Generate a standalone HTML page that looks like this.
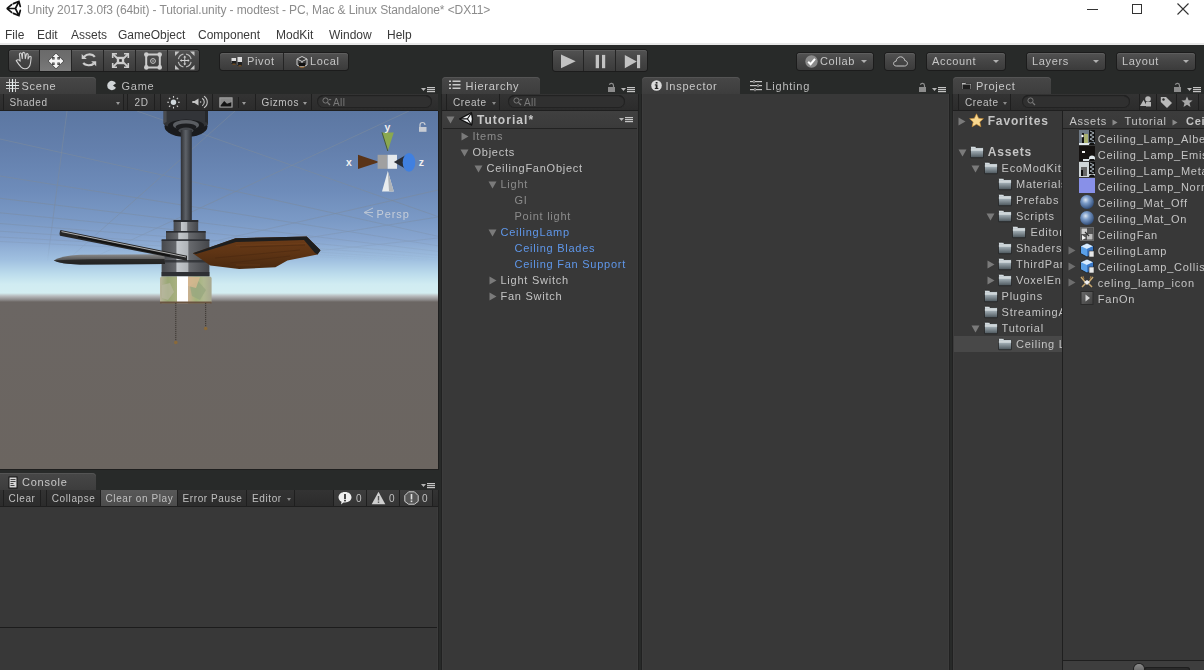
<!DOCTYPE html>
<html><head><meta charset="utf-8">
<style>
*{box-sizing:border-box;margin:0;padding:0}
html,body{width:1204px;height:670px;overflow:hidden;background:#282a29;font-family:"Liberation Sans",sans-serif}
.t{-webkit-font-smoothing:antialiased;transform:translateZ(0)}
.a{position:absolute}
svg{position:absolute;overflow:visible}
.t{position:absolute;white-space:pre;line-height:1}
.menu{font-size:12px;color:#3a3a3a;top:29px}
.tb{position:absolute;top:50px;height:21px;border-radius:3px;background:linear-gradient(#525252,#474747 40%,#3b3b3b);box-shadow:0 0 0 1px #1c1c1c, inset 0 1px 0 #5e5e5e}
.tb2{top:53px;height:17px}
.sep{position:absolute;top:0;width:1px;height:100%;background:#242424}
.tbt{font-size:11px;color:#c6c6c6;letter-spacing:.65px}
.arr{position:absolute;width:0;height:0;border-left:3px solid transparent;border-right:3px solid transparent;border-top:3px solid #b0b0b0}
.panel{position:absolute;background:#383838}
.tab{position:absolute;height:17px;background:linear-gradient(#484848,#3e3e3e);border-radius:0 4px 0 0;box-shadow:inset 0 1px 0 #535353,inset -1px 0 0 #303030}
.tabt{font-size:11px;color:#c8c8c8;letter-spacing:.75px}
.tabi{font-size:11px;color:#bdbdbd;letter-spacing:.75px}
.ptb{position:absolute;height:17px;background:linear-gradient(#313131,#2a2a2a);box-shadow:inset 0 -1px 0 #1e1e1e}
.ui{font-size:10px;color:#c0c0c0;letter-spacing:.6px}
.h{font-size:11px;letter-spacing:.75px;color:#c4c4c4}
.g{color:#8c8c8c}
.b{color:#5f97ea}
.tri{position:absolute;width:0;height:0}
.tr{border-top:4px solid transparent;border-bottom:4px solid transparent;border-left:7px solid #7a7a7a}
.td{border-left:4px solid transparent;border-right:4px solid transparent;border-top:7px solid #7a7a7a}
</style></head><body>

<!-- title & menu -->
<div class="a" style="left:0;top:0;width:1204px;height:44px;background:#fff"></div>
<div class="a" style="left:0;top:43px;width:1204px;height:2px;background:#e8e8e8"></div>
<svg width="30" height="20" style="left:0;top:0" viewBox="0 0 30 20"><g fill="none" stroke="#111" stroke-width="1.7" stroke-linecap="round"><path d="M7.2,8.5 L15.4,8.5 M15.4,8.5 L18.6,2.2 M15.4,8.5 L18.6,14.8 M7.4,8.2 L11.6,4.6 M13.4,3.6 L18.9,1.4 L20.3,6.5 M20.3,10.4 L18.9,15.5 L13.4,13.4 M11.6,12.4 L7.4,8.8"/></g></svg>
<div class="t" style="left:27px;top:4px;font-size:12px;color:#8c8c8c;letter-spacing:-.1px">Unity 2017.3.0f3 (64bit) - Tutorial.unity - modtest - PC, Mac &amp; Linux Standalone* &lt;DX11&gt;</div>
<div class="t menu" style="left:5px">File</div>
<div class="t menu" style="left:37px">Edit</div>
<div class="t menu" style="left:71px">Assets</div>
<div class="t menu" style="left:118px">GameObject</div>
<div class="t menu" style="left:198px">Component</div>
<div class="t menu" style="left:276px">ModKit</div>
<div class="t menu" style="left:329px">Window</div>
<div class="t menu" style="left:387px">Help</div>
<!-- window controls -->
<div class="a" style="left:1087px;top:9px;width:11px;height:1px;background:#333"></div>
<div class="a" style="left:1132px;top:4px;width:10px;height:10px;border:1px solid #333"></div>
<svg width="14" height="14" style="left:1177px;top:3px"><path d="M0.5,0.5 L11.5,11.5 M11.5,0.5 L0.5,11.5" stroke="#333" stroke-width="1.1"/></svg>

<!-- main toolbar -->
<div class="tb" style="left:9px;width:190px">
  <div class="a" style="left:31px;top:0;width:32px;height:21px;background:linear-gradient(#6a6a6a,#707070 50%,#7a7a7a)"></div>
  <div class="sep" style="left:30px"></div><div class="sep" style="left:62px"></div><div class="sep" style="left:94px"></div><div class="sep" style="left:126px"></div><div class="sep" style="left:158px"></div>
</div>
<!-- hand -->
<svg width="20" height="20" style="left:14px;top:51px" viewBox="0 0 20 20"><path d="M2.2,9.6 Q3.4,8.4 4.8,8.9 L6.2,10.2 L5.4,3.2 Q5.6,2 6.6,2.1 Q7.4,2.2 7.6,3.2 L8.3,7.6 L8.6,2.2 Q9,1.3 9.9,1.4 Q10.8,1.6 10.9,2.5 L11.3,7.6 L12.3,3.3 Q12.8,2.4 13.6,2.7 Q14.3,3 14.2,4 L14,8 L15.3,5.8 Q15.9,5 16.7,5.5 Q17.3,6 17.1,7 L16.6,11.5 Q16.2,14.8 14.6,16.4 Q13,18 10.6,17.8 Q8.6,17.6 7.2,16.2 Q5,13.8 2.2,9.6Z" fill="none" stroke="#d4d4d4" stroke-width="1.05" stroke-linejoin="round"/></svg>
<!-- move -->
<svg width="16" height="16" style="left:48px;top:53px" viewBox="0 0 16 16"><path d="M8,0.5 L11.4,4.1 L9.4,4.1 L9.4,6.6 L11.9,6.6 L11.9,4.6 L15.5,8 L11.9,11.4 L11.9,9.4 L9.4,9.4 L9.4,11.9 L11.4,11.9 L8,15.5 L4.6,11.9 L6.6,11.9 L6.6,9.4 L4.1,9.4 L4.1,11.4 L0.5,8 L4.1,4.6 L4.1,6.6 L6.6,6.6 L6.6,4.1 L4.6,4.1 Z" fill="#f6f6f6" stroke="#3a3a3a" stroke-width="1.1" stroke-linejoin="round" style="paint-order:stroke"/></svg>
<!-- rotate -->
<svg width="24" height="20" style="left:76px;top:50px" viewBox="0 0 24 20"><g fill="none" stroke="#cdcdcd" stroke-width="2.1"><path d="M7.6,8.2 A6.1,4.9 0 0 1 18.8,6.8"/><path d="M7.2,13 A6.2,3.9 0 0 0 17.8,13.6"/></g><path d="M5.7,3.9 L5.7,8.9 L10.8,8.9 Z M20.2,11.2 L15.2,11.2 L20.2,16.2 Z" fill="#cdcdcd"/></svg>
<!-- scale -->
<svg width="19" height="17" style="left:111px;top:52px" viewBox="0 0 19 17"><g fill="#cdcdcd"><path d="M0.9,1 H6 V2.6 H2.5 V6 H0.9 Z M18.1,1 H13 V2.6 H16.5 V6 H18.1 Z M0.9,16 H6 V14.4 H2.5 V10.9 H0.9 Z M18.1,16 H13 V14.4 H16.5 V10.9 H18.1 Z"/><rect x="5.9" y="4.9" width="7.2" height="7.2"/></g><g stroke="#cdcdcd" stroke-width="1.8"><path d="M2,2 L6.3,6.3 M17,2 L12.7,6.3 M2,15 L6.3,10.7 M17,15 L12.7,10.7"/></g><rect x="5.9" y="4.9" width="7.2" height="7.2" fill="none" stroke="#cdcdcd" stroke-width=".1"/><rect x="8.2" y="7.2" width="2.6" height="2.6" fill="#2e2e2e"/></svg>
<!-- rect -->
<svg width="18" height="18" style="left:144px;top:52px" viewBox="0 0 18 18"><g fill="#cccccc"><rect x="2" y="1.5" width="14" height="2"/><rect x="2" y="14.5" width="14" height="2"/><rect x="1.2" y="2" width="2" height="14"/><rect x="14.8" y="2" width="2" height="14"/><circle cx="2.3" cy="2.6" r="2.3"/><circle cx="15.7" cy="2.6" r="2.3"/><circle cx="2.3" cy="15.4" r="2.3"/><circle cx="15.7" cy="15.4" r="2.3"/></g><circle cx="9" cy="9" r="2.4" fill="none" stroke="#c8c8c8" stroke-width="1"/><circle cx="9" cy="9" r=".8" fill="#c8c8c8"/></svg>
<!-- transform -->
<svg width="20" height="19" style="left:175px;top:51px" viewBox="0 0 20 19"><g fill="#c4c4c4"><path d="M0,0.5 L4.5,0.5 L0,5Z M19.5,0.5 L15,0.5 L19.5,5Z M0,18.5 L4.5,18.5 L0,14Z M19.5,18.5 L15,18.5 L19.5,14Z"/></g><g fill="none" stroke="#b8b8b8" stroke-width="1.2"><path d="M3.4,8.2 A6.4,6.4 0 0 1 8.4,3.2 M11.1,3.2 A6.4,6.4 0 0 1 16.1,8.2 M16.1,10.8 A6.4,6.4 0 0 1 11.1,15.8 M8.4,15.8 A6.4,6.4 0 0 1 3.4,10.8"/></g><g stroke="#cfcfcf" stroke-width="1"><path d="M9.75,5.5 V13.5 M5.75,9.5 H13.75"/></g><path d="M9.75,4.6 L8.3,6.4 L11.2,6.4Z M9.75,14.4 L8.3,12.6 L11.2,12.6Z M4.9,9.5 L6.7,8.05 L6.7,10.95Z M14.6,9.5 L12.8,8.05 L12.8,10.95Z" fill="#cfcfcf"/></svg>
<!-- pivot/local -->
<div class="tb tb2" style="left:220px;width:128px"><div class="sep" style="left:63px"></div></div>
<svg width="12" height="10" style="left:231px;top:57px" viewBox="0 0 12 10"><rect x="0.5" y="1" width="4.5" height="5" fill="#dcdcdc"/><rect x="0.5" y="4" width="4.5" height="3" fill="#202020"/><rect x="6.5" y="0" width="4.5" height="8" fill="#dcdcdc"/><rect x="6.5" y="5" width="4.5" height="4" fill="#202020"/><rect x="1.5" y="6.5" width="3" height="1.5" fill="#6b4a22"/><rect x="7.5" y="8" width="3" height="1.5" fill="#6b4a22"/></svg>
<div class="t tbt" style="left:247px;top:56px">Pivot</div>
<svg width="12" height="12" style="left:296px;top:56px" viewBox="0 0 12 12"><path d="M6,0.5 L11,3 L11,9 L6,11.5 L1,9 L1,3 Z" fill="#3a3a3a" stroke="#cfcfcf" stroke-width="1"/><path d="M1,3 L6,5.5 L11,3 M6,5.5 L6,11.5" fill="none" stroke="#cfcfcf" stroke-width="1"/><rect x="3" y="7" width="6" height="3" fill="#111"/><path d="M3,10.5 L6,11.8 L9,10.5" stroke="#8a5a22" stroke-width="1" fill="none"/></svg>
<div class="t tbt" style="left:310px;top:56px">Local</div>

<!-- play -->
<div class="tb" style="left:553px;width:94px"><div class="sep" style="left:30px"></div><div class="sep" style="left:62px"></div></div>
<svg width="94" height="21" style="left:553px;top:50px"><g fill="#c2c2c2"><path d="M8,4.5 L22.7,11.3 L8,18.2Z"/><rect x="42.7" y="4.9" width="3.3" height="13.3"/><rect x="49" y="4.9" width="3.2" height="13.3"/><path d="M71.8,4.9 L83.8,11.5 L71.8,18.2Z"/><rect x="84" y="4.9" width="3.1" height="13.3"/></g></svg>

<!-- right buttons -->
<div class="tb tb2" style="left:797px;width:76px"></div>
<svg width="13" height="13" style="left:804.5px;top:55px" viewBox="0 0 13 13"><circle cx="6.5" cy="6.5" r="6.2" fill="#8a8a8a"/><path d="M3.2,6.8 L5.6,9.2 L10,3.8" fill="none" stroke="#fff" stroke-width="2"/></svg>
<div class="t tbt" style="left:820px;top:56px">Collab</div>
<div class="arr" style="left:860.5px;top:60px"></div>
<div class="tb tb2" style="left:885px;width:30px"></div>
<svg width="15" height="11" style="left:893px;top:56px" viewBox="0 0 15 11"><path d="M3.5,10 C1.5,10 0.6,8.8 0.6,7.6 C0.6,6.2 1.7,5.2 3.1,5.3 C3.3,2.8 5.2,0.8 7.6,0.8 C9.8,0.8 11.5,2.5 11.8,4.6 C13.3,4.7 14.4,5.9 14.4,7.3 C14.4,8.8 13.3,10 11.6,10 Z" fill="none" stroke="#c8c8c8" stroke-width="1"/></svg>
<div class="tb tb2" style="left:927px;width:78px"></div>
<div class="t tbt" style="left:932px;top:56px">Account</div>
<div class="arr" style="left:992.5px;top:60px"></div>
<div class="tb tb2" style="left:1027px;width:78px"></div>
<div class="t tbt" style="left:1032px;top:56px">Layers</div>
<div class="arr" style="left:1092.5px;top:60px"></div>
<div class="tb tb2" style="left:1117px;width:78px"></div>
<div class="t tbt" style="left:1122px;top:56px">Layout</div>
<div class="arr" style="left:1182.5px;top:60px"></div>

<div class="a" style="left:0px;top:77px;width:96px;height:17px;background:linear-gradient(#474747,#3d3d3d);border-radius:0 4px 0 0;box-shadow:inset 0 1px 0 #545454"></div>
<svg width="13" height="13" style="left:6px;top:79px" viewBox="0 0 13 13"><g stroke="#c8c8c8" stroke-width="1"><path d="M3.5,0 V13 M9.5,0 V13 M0,3.5 H13 M0,9.5 H13"/></g><path d="M6.5,0 V13 M0,6.5 H13" stroke="#e8f0f0" stroke-width="1.2"/></svg>
<div class="t tabt" style="left:21.5px;top:81px;font-size:11px;">Scene</div>
<svg width="10" height="11" style="left:107px;top:80px" viewBox="0 0 10 11"><path d="M9,3.2 A4.7,4.7 0 1 0 9,7.8 L6,5.5 Z" fill="#d0d4d6"/></svg>
<div class="t tabi" style="left:121.5px;top:81px;font-size:11px;">Game</div>
<svg width="15" height="6" style="left:421px;top:87px" viewBox="0 0 15 6"><path d="M0,1 L5,1 L2.5,4Z" fill="#b4b4b4"/><rect x="6" y="0" width="8" height="1.2" fill="#c4c4c4"/><rect x="6" y="2" width="8" height="1.2" fill="#c4c4c4"/><rect x="6" y="4" width="8" height="1.2" fill="#c4c4c4"/></svg>
<div class="a" style="left:0px;top:94px;width:438px;height:17px;background:linear-gradient(#333333,#2b2b2b);box-shadow:inset 0 -1px 0 #1f1f1f"></div>
<div class="a" style="left:3px;top:94px;width:1px;height:16px;background:#1f1f1f"></div>
<div class="a" style="left:123px;top:94px;width:1px;height:16px;background:#1f1f1f"></div>
<div class="a" style="left:127px;top:94px;width:1px;height:16px;background:#1f1f1f"></div>
<div class="a" style="left:154px;top:94px;width:1px;height:16px;background:#1f1f1f"></div>
<div class="a" style="left:160px;top:94px;width:1px;height:16px;background:#1f1f1f"></div>
<div class="a" style="left:186px;top:94px;width:1px;height:16px;background:#1f1f1f"></div>
<div class="a" style="left:212px;top:94px;width:1px;height:16px;background:#1f1f1f"></div>
<div class="a" style="left:255px;top:94px;width:1px;height:16px;background:#1f1f1f"></div>
<div class="a" style="left:311px;top:94px;width:1px;height:16px;background:#1f1f1f"></div>
<div class="a" style="left:4px;top:94px;width:119px;height:16px;background:linear-gradient(#353535,#2d2d2d)"></div>
<div class="t ui" style="left:9.5px;top:98px;font-size:10px;">Shaded</div>
<div class="arr" style="left:115.5px;top:101.5px;border-top-color:#9a9a9a;border-width:3px 2.5px 0"></div>
<div class="t ui" style="left:134.5px;top:98px;font-size:10px;">2D</div>
<svg width="13" height="14" style="left:167px;top:95px" viewBox="0 0 13 14"><circle cx="6.5" cy="7.3" r="2.7" fill="#d0d8dc"/><g stroke="#cfcfcf" stroke-width="1.1"><path d="M6.5,1 V2.8 M6.5,11.8 V13.6 M0.2,7.3 H2 M11,7.3 H12.8 M2,2.8 L3.2,4 M9.8,10.6 L11,11.8 M2,11.8 L3.2,10.6 M9.8,4 L11,2.8"/></g></svg>
<svg width="15" height="14" style="left:192px;top:95px" viewBox="0 0 15 14"><path d="M1,7 L6.5,3.5 L6.5,10.5 Z" fill="#c4c4c4"/><rect x="0.3" y="6" width="2.5" height="2" fill="#c4c4c4"/><circle cx="8.6" cy="7" r=".8" fill="#c4c4c4"/><g fill="none" stroke="#c4c4c4" stroke-width="1.1"><path d="M10.2,3.2 A4.5,4.5 0 0 1 10.2,10.8"/><path d="M12,1.2 A6.8,6.8 0 0 1 12,12.8"/></g></svg>
<svg width="14" height="11" style="left:219px;top:97px" viewBox="0 0 14 11"><rect x="0.8" y="0.8" width="12.3" height="9.3" fill="#8a8a8a" stroke="#a0a0a0" stroke-width="1"/><path d="M1.6,9.4 L1.6,8.6 L5.2,4 L8,6.8 L12.3,5.2 L12.3,9.4Z" fill="#141414"/></svg>
<div class="a" style="left:238px;top:97px;width:1px;height:11px;background:#1f1f1f"></div>
<div class="arr" style="left:241.5px;top:101.5px;border-top-color:#9a9a9a;border-width:3px 2.5px 0"></div>
<div class="t ui" style="left:261.5px;top:98px;font-size:10px;">Gizmos</div>
<div class="arr" style="left:303px;top:101.5px;border-top-color:#9a9a9a;border-width:3px 2.5px 0"></div>
<div class="a" style="left:317px;top:95px;width:115px;height:13px;border-radius:7px;background:#303030;box-shadow:inset 0 0 0 1px #222, inset 0 1px 1px #1a1a1a"></div>
<svg width="10" height="9" style="left:322px;top:97px" viewBox="0 0 10 9"><circle cx="3.5" cy="3.5" r="2.6" fill="none" stroke="#7a7a7a" stroke-width="1"/><path d="M5.4,5.4 L8,8" stroke="#7a7a7a" stroke-width="1.3"/><path d="M6.5,2 L9.5,2 L8,3.5Z" fill="#7a7a7a"/></svg>
<div class="t " style="left:333px;top:98px;font-size:10px;color:#7a7a7a;letter-spacing:.4px">All</div>
<div class="a" style="left:0;top:111px;width:438px;height:358px;overflow:hidden;background:linear-gradient(#5c77a2 0px,#6480ad 40px,#6e8cba 80px,#7b9ac6 110px,#88a6d0 129px,#a0c0e0 149px,#bcdcec 163px,#d0ecf2 173px,#d4eef2 182px,#b8bcbe 185px,#8a8888 189px,#6b6663 191px,#6b6560 358px)"><svg width="438" height="358" style="left:0;top:0" viewBox="0 111 438 358">
<defs>
<linearGradient id="rod" x1="0" x2="1"><stop offset="0" stop-color="#2e3034"/><stop offset=".45" stop-color="#5e6268"/><stop offset=".6" stop-color="#50545a"/><stop offset="1" stop-color="#2a2c30"/></linearGradient>
<linearGradient id="hous" x1="0" x2="1"><stop offset="0" stop-color="#46484c"/><stop offset=".3" stop-color="#66686c"/><stop offset=".32" stop-color="#c4c8cc"/><stop offset=".55" stop-color="#b0b4b8"/><stop offset=".57" stop-color="#686a6e"/><stop offset="1" stop-color="#44464a"/></linearGradient>
<linearGradient id="glass" x1="0" x2="1"><stop offset="0" stop-color="#b8b49c"/><stop offset=".15" stop-color="#9aa876"/><stop offset=".32" stop-color="#a8b080"/><stop offset=".33" stop-color="#ffffff"/><stop offset=".54" stop-color="#ffffff"/><stop offset=".55" stop-color="#c8b090"/><stop offset=".7" stop-color="#a4b47c"/><stop offset=".85" stop-color="#b0b890"/><stop offset="1" stop-color="#a8a890"/></linearGradient>
<linearGradient id="wood" x1="0" y1="0" x2="0" y2="1"><stop offset="0" stop-color="#6c3c18"/><stop offset=".5" stop-color="#5e3414"/><stop offset="1" stop-color="#4a2a10"/></linearGradient>
<linearGradient id="bl2" x1="0" y1="0" x2="0" y2="1"><stop offset="0" stop-color="#8a8a8a"/><stop offset=".5" stop-color="#5a5a5a"/><stop offset="1" stop-color="#252525"/></linearGradient>
<linearGradient id="fadeg" x1="0" y1="111" x2="0" y2="469" gradientUnits="userSpaceOnUse"><stop offset="0" stop-color="#fff"/><stop offset=".25" stop-color="#fff"/><stop offset=".37" stop-color="#fff" stop-opacity=".35"/><stop offset=".42" stop-color="#fff" stop-opacity="0"/></linearGradient><mask id="fade" maskUnits="userSpaceOnUse" x="0" y="111" width="438" height="358"><rect x="0" y="111" width="438" height="358" fill="url(#fadeg)"/></mask>
</defs>
<path d="M0.0,139.0 L438.0,236.3 M0.0,176.0 L438.0,245.8 M0.0,198.3 L438.0,251.5 M0.0,212.8 L438.0,255.3 M0.0,223.5 L438.0,258.0 M0.0,231.2 L438.0,260.0 M0.0,237.0 L438.0,261.5 M0.0,241.5 L438.0,262.7 M137.0,111.0 L438.0,216.6 M45.0,280.0 L67.0,111.0 M45.0,280.0 L235.0,111.0 M45.0,280.0 L409.0,111.0 M45.0,280.0 L438.0,190.0 M45.0,280.0 L438.0,217.0 M45.0,280.0 L438.0,238.0" stroke="#7c8a9c" stroke-opacity=".6" stroke-width="1" fill="none" mask="url(#fade)"/>
<ellipse cx="186" cy="126.5" rx="21.5" ry="10.5" fill="#1a1b1e"/>
<rect x="163.6" y="111" width="44.4" height="13" fill="#323438"/>
<rect x="163.6" y="111" width="3" height="13" fill="#4a4c50"/><rect x="205" y="111" width="3" height="13" fill="#26282b"/>
<ellipse cx="186" cy="124" rx="22.2" ry="4" fill="#323438"/>
<ellipse cx="186" cy="125.5" rx="18" ry="6" fill="#1a1b1e"/>
<ellipse cx="186" cy="125" rx="13" ry="5" fill="#5a5d62"/>
<ellipse cx="186" cy="127" rx="10.5" ry="3.6" fill="#1c1d20"/>
<ellipse cx="186" cy="130.5" rx="7.5" ry="3" fill="#45484d"/>
<rect x="180.8" y="130" width="11" height="91" fill="url(#rod)"/>
<rect x="173.6" y="220.4" width="24.6" height="11.2" fill="url(#hous)"/>
<rect x="173.6" y="220" width="24.6" height="2" fill="#2a2c30"/>
<rect x="166" y="231.6" width="39.7" height="8.3" fill="url(#hous)"/>
<rect x="166" y="231" width="39.7" height="1.6" fill="#2a2c30"/>
<rect x="161.6" y="239.9" width="47.8" height="36.5" fill="url(#hous)"/>
<rect x="161.6" y="239.3" width="47.8" height="1.6" fill="#2a2c30"/>
<rect x="161.6" y="260" width="47.8" height="2.5" fill="#2c2e32" opacity=".8"/>
<rect x="161.6" y="272" width="47.8" height="4.4" fill="#2e3034"/>
<rect x="160" y="276.4" width="51.6" height="26.9" rx="2" fill="url(#glass)"/>
<path d="M162,285 L170,283 L174,292 L168,300 L162,298Z" fill="#b8b8a0" opacity=".7"/><path d="M190,286 L198,281 L206,290 L200,300 L192,296Z" fill="#98a880" opacity=".8"/><path d="M188,277 L200,277 L196,288 L188,286Z" fill="#d8b890" opacity=".8"/>
<rect x="160" y="301.5" width="51.6" height="2" fill="#6a5440"/>
<path d="M175.8,303 L175.8,341 M205.7,303 L205.7,327" stroke="#3a3630" stroke-width="1" stroke-dasharray="1.2,.8"/>
<circle cx="175.8" cy="342.5" r="1.8" fill="#8a6a3a"/><circle cx="205.7" cy="328.5" r="1.8" fill="#8a6a3a"/>
<path d="M53.7,260.5 Q60,256 80,254.8 L164.5,254.3 L165,264 L80,264.5 Q60,264 53.7,260.5Z" fill="url(#bl2)"/>
<path d="M53.7,260.5 Q70,258.5 164.5,259 L165,264 L80,264.5 Q60,264 53.7,260.5Z" fill="#222" opacity=".85"/>
<path d="M60.5,230 L187,255.8 L187,260.8 L60,235.8 Q59,233 60.5,230Z" fill="#262626"/>
<path d="M61.5,231.6 L186,257" stroke="#b0b0b0" stroke-width="1"/>
<path d="M78,236.8 L170,255.8" stroke="#111" stroke-width="1.6"/>
<path d="M192.8,253.3 L235.6,238.3 L306.7,236.4 L320.5,250.3 L317.5,254.5 L287.4,260.5 L275.4,267.2 L239.2,269 L210.3,265.4 Z" fill="url(#wood)"/>
<path d="M192.8,253.3 L235.6,238.3 L306.7,236.4 L320.5,250.3 L317.5,254.5 L315,253 L304,240 L236,242 L196,254 Z" fill="#1e1e1e"/>
<path d="M215,258 L300,250 M230,263 L290,256 M240,247 L305,245" stroke="#4a2810" stroke-width=".8" opacity=".7"/>
<path d="M236,245.5 L306,243.5 M236,265 L260,265" stroke="#7a4620" stroke-width=".6" opacity=".6"/>
<path d="M382,132.4 L393.8,132.4 L387.8,151Z" fill="#8aa850"/>
<path d="M382,132.4 L387.8,151" stroke="#3a4a24" stroke-width=".8"/>
<path d="M358,154.8 L358,169 L379.4,162Z" fill="#5a3418"/>
<path d="M379,159 L385,156 L385,168 L379,165Z" fill="#d0d0d0"/>
<rect x="377.6" y="154.8" width="10" height="14" fill="#a0a0a0"/>
<rect x="387.6" y="154.8" width="9.4" height="14" fill="#e4e8ec"/>
<path d="M393.8,162 L406,155 L406,169Z" fill="#2a2e36"/>
<ellipse cx="409" cy="162.4" rx="6.3" ry="9.4" fill="#4080e0"/>
<path d="M382,191.5 L393.8,191.5 L387.8,171Z" fill="#e8ecee"/><path d="M387.8,171 L393.8,191.5 L389,191.5Z" fill="#b0b4b8"/>
<text x="346" y="165.5" font-family="Liberation Sans" font-weight="bold" font-size="10.5" fill="#f0f0f0">x</text>
<text x="384.5" y="130.5" font-family="Liberation Sans" font-weight="bold" font-size="10.5" fill="#f0f0f0">y</text>
<text x="418.8" y="166" font-family="Liberation Sans" font-weight="bold" font-size="10.5" fill="#f0f0f0">z</text>
<path d="M420,127 L420,125 A2.5,2.5 0 0 1 425,125" stroke="#c8ccd4" stroke-width="1.2" fill="none"/><rect x="419" y="127" width="7.5" height="4.8" fill="#c8ccd4"/>
<path d="M373,208 L364,212.5 L373,217" stroke="#b8c4d4" stroke-width="1" fill="none"/><path d="M364,212.5 L373,212.5" stroke="#b8c4d4" stroke-width="1"/>
</svg>
<div class="t" style="left:376.5px;top:97.5px;font-size:11px;color:#c4ccd8;letter-spacing:.9px">Persp</div></div>
<div class="a" style="left:438px;top:111px;width:1px;height:358px;background:#1e1e1e"></div>
<div class="a" style="left:0px;top:469px;width:439px;height:1px;background:#1e1e1e"></div>
<div class="a" style="left:0px;top:473px;width:96px;height:17px;background:linear-gradient(#474747,#3d3d3d);border-radius:0 4px 0 0;box-shadow:inset 0 1px 0 #545454"></div>
<svg width="10" height="13" style="left:8px;top:476px" viewBox="0 0 10 13"><rect x="0.5" y="0.5" width="9" height="12" fill="#111"/><rect x="1.5" y="1.5" width="7" height="10" fill="#d8d8d8"/><g fill="#444"><rect x="2.5" y="3" width="5" height="1"/><rect x="2.5" y="5" width="5" height="1"/><rect x="2.5" y="7" width="3" height="1"/><rect x="2.5" y="9" width="4" height="1"/></g></svg>
<div class="t tabt" style="left:22px;top:477px;font-size:11px;">Console</div>
<svg width="15" height="6" style="left:421px;top:483px" viewBox="0 0 15 6"><path d="M0,1 L5,1 L2.5,4Z" fill="#b4b4b4"/><rect x="6" y="0" width="8" height="1.2" fill="#c4c4c4"/><rect x="6" y="2" width="8" height="1.2" fill="#c4c4c4"/><rect x="6" y="4" width="8" height="1.2" fill="#c4c4c4"/></svg>
<div class="a" style="left:0px;top:490px;width:438px;height:17px;background:linear-gradient(#333333,#2b2b2b);box-shadow:inset 0 -1px 0 #1f1f1f"></div>
<div class="a" style="left:100px;top:490px;width:77px;height:16px;background:linear-gradient(#585858,#4c4c4c)"></div>
<div class="a" style="left:333px;top:490px;width:99px;height:16px;background:linear-gradient(#3d3d3d,#353535)"></div>
<div class="a" style="left:3px;top:490px;width:1px;height:16px;background:#1f1f1f"></div>
<div class="a" style="left:40px;top:490px;width:1px;height:16px;background:#1f1f1f"></div>
<div class="a" style="left:46px;top:490px;width:1px;height:16px;background:#1f1f1f"></div>
<div class="a" style="left:100px;top:490px;width:1px;height:16px;background:#1f1f1f"></div>
<div class="a" style="left:177px;top:490px;width:1px;height:16px;background:#1f1f1f"></div>
<div class="a" style="left:246px;top:490px;width:1px;height:16px;background:#1f1f1f"></div>
<div class="a" style="left:294px;top:490px;width:1px;height:16px;background:#1f1f1f"></div>
<div class="a" style="left:333px;top:490px;width:1px;height:16px;background:#1f1f1f"></div>
<div class="a" style="left:366px;top:490px;width:1px;height:16px;background:#1f1f1f"></div>
<div class="a" style="left:399px;top:490px;width:1px;height:16px;background:#1f1f1f"></div>
<div class="a" style="left:432px;top:490px;width:1px;height:16px;background:#1f1f1f"></div>
<div class="t ui" style="left:8.6px;top:494px;font-size:10px;">Clear</div>
<div class="t ui" style="left:51.8px;top:494px;font-size:10px;">Collapse</div>
<div class="t ui" style="left:105.5px;top:494px;font-size:10px;">Clear on Play</div>
<div class="t ui" style="left:182.5px;top:494px;font-size:10px;">Error Pause</div>
<div class="t ui" style="left:252px;top:494px;font-size:10px;">Editor</div>
<div class="arr" style="left:287px;top:498px;border-top-color:#8a8a8a;border-width:3px 2.5px 0"></div>
<svg width="15" height="14" style="left:338px;top:491px" viewBox="0 0 15 14"><path d="M7,1 C10.8,1 13.5,3.2 13.5,6.3 C13.5,9.2 10.8,11.5 7,11.5 L5.5,11.5 L3,13.5 L3.5,10.8 C1.6,9.8 0.5,8.2 0.5,6.3 C0.5,3.2 3.2,1 7,1Z" fill="#efefef"/><rect x="6.1" y="3" width="1.8" height="5" fill="#333"/><rect x="6.1" y="8.8" width="1.8" height="1.6" fill="#333"/></svg>
<div class="t ui" style="left:356px;top:494px;font-size:10px;">0</div>
<svg width="15" height="14" style="left:371px;top:491px" viewBox="0 0 15 14"><path d="M7.5,0.8 L14.3,13.2 L0.7,13.2Z" fill="#cfcfcf"/><rect x="6.8" y="5" width="1.4" height="4.5" fill="#555"/><rect x="6.8" y="10.5" width="1.4" height="1.4" fill="#555"/></svg>
<div class="t ui" style="left:389px;top:494px;font-size:10px;">0</div>
<svg width="15" height="14" style="left:404px;top:491px" viewBox="0 0 15 14"><path d="M4.6,0.8 L10.4,0.8 L14.2,4.6 L14.2,10.4 L10.4,13.2 L4.6,13.2 L0.8,10.4 L0.8,4.6Z" fill="#555" stroke="#cfcfcf" stroke-width="1"/><rect x="6.7" y="3" width="1.6" height="5.5" fill="#e0e0e0"/><rect x="6.7" y="9.5" width="1.6" height="1.6" fill="#e0e0e0"/></svg>
<div class="t ui" style="left:422px;top:494px;font-size:10px;">0</div>
<div class="a" style="left:0px;top:507px;width:438px;height:163px;background:#383838"></div>
<div class="a" style="left:0px;top:627px;width:438px;height:1px;background:#1c1c1c"></div>
<div class="a" style="left:442px;top:77px;width:98px;height:17px;background:linear-gradient(#474747,#3d3d3d);border-radius:4px 4px 0 0;box-shadow:inset 0 1px 0 #545454"></div>
<svg width="12" height="10" style="left:449px;top:80px" viewBox="0 0 12 10"><g fill="#c8c8c8"><rect x="0" y="0.5" width="2" height="1.5"/><rect x="0" y="4" width="2" height="1.5"/><rect x="0" y="7.5" width="2" height="1.5"/><rect x="3.5" y="0.5" width="8" height="1.5"/><rect x="3.5" y="4" width="8" height="1.5"/><rect x="3.5" y="7.5" width="8" height="1.5"/></g></svg>
<div class="t tabt" style="left:465.5px;top:81px;font-size:11px;">Hierarchy</div>
<svg width="8" height="10" style="left:608px;top:83px" viewBox="0 0 8 10"><path d="M5.5,4.5 L5.5,2.4 A2.1,2.1 0 0 0 1.4,1.8" fill="none" stroke="#8c8c8c" stroke-width="1.2"/><rect x="0" y="4" width="7" height="5" fill="#8c8c8c"/></svg>
<svg width="15" height="6" style="left:621px;top:87px" viewBox="0 0 15 6"><path d="M0,1 L5,1 L2.5,4Z" fill="#b4b4b4"/><rect x="6" y="0" width="8" height="1.2" fill="#c4c4c4"/><rect x="6" y="2" width="8" height="1.2" fill="#c4c4c4"/><rect x="6" y="4" width="8" height="1.2" fill="#c4c4c4"/></svg>
<div class="a" style="left:442px;top:94px;width:196px;height:17px;background:linear-gradient(#333333,#2b2b2b);box-shadow:inset 0 -1px 0 #1f1f1f"></div>
<div class="a" style="left:446px;top:94px;width:1px;height:16px;background:#1f1f1f"></div>
<div class="a" style="left:499px;top:94px;width:1px;height:16px;background:#1f1f1f"></div>
<div class="t ui" style="left:453px;top:98px;font-size:10px;">Create</div>
<div class="arr" style="left:492px;top:101.5px;border-top-color:#8a8a8a;border-width:3px 2.5px 0"></div>
<div class="a" style="left:508px;top:95px;width:117px;height:13px;border-radius:7px;background:#303030;box-shadow:inset 0 0 0 1px #222, inset 0 1px 1px #1a1a1a"></div>
<svg width="10" height="9" style="left:513px;top:97px" viewBox="0 0 10 9"><circle cx="3.5" cy="3.5" r="2.6" fill="none" stroke="#7a7a7a" stroke-width="1"/><path d="M5.4,5.4 L8,8" stroke="#7a7a7a" stroke-width="1.3"/><path d="M6.5,2 L9.5,2 L8,3.5Z" fill="#7a7a7a"/></svg>
<div class="t " style="left:524px;top:98px;font-size:10px;color:#7a7a7a;letter-spacing:.4px">All</div>
<div class="a" style="left:442px;top:111px;width:196px;height:559px;background:#383838"></div>
<div class="a" style="left:442px;top:110px;width:196px;height:19px;background:linear-gradient(#404040,#3a3a3a);box-shadow:inset 0 -1px 0 #222, inset 0 1px 0 #1e1e1e"></div>
<svg width="9" height="8" style="left:446px;top:115.5px" viewBox="0 0 9 8"><path d="M0.5,0.5 L8.5,0.5 L4.5,7.5Z" fill="#7a7a7a"/></svg>
<svg width="15" height="14" style="left:459px;top:112px" viewBox="0 0 15 14"><path d="M0.3,6.9 L12.5,0.4 Q14.8,6.9 12.8,13.4 Z" fill="#111" stroke="#111" stroke-width="1" stroke-linejoin="round"/><path d="M2,6.9 L11.9,1.7 Q13.6,6.9 12.1,12.1 Z" fill="#f4f6f8"/><path d="M2,6.9 L8.4,6.9 M8.4,6.9 L11.9,1.8 M8.4,6.9 L12.1,12" stroke="#111" stroke-width="1.1"/></svg>
<div class="t " style="left:476.9px;top:114px;font-size:12px;font-weight:bold;color:#c8c8c8;letter-spacing:1.05px">Tutorial*</div>
<svg width="15" height="6" style="left:619px;top:117px" viewBox="0 0 15 6"><path d="M0,1 L5,1 L2.5,4Z" fill="#b4b4b4"/><rect x="6" y="0" width="8" height="1.2" fill="#c4c4c4"/><rect x="6" y="2" width="8" height="1.2" fill="#c4c4c4"/><rect x="6" y="4" width="8" height="1.2" fill="#c4c4c4"/></svg>
<svg width="8" height="9" style="left:461.0px;top:131.5px" viewBox="0 0 8 9"><path d="M0.5,0.5 L7.5,4.5 L0.5,8.5Z" fill="#7a7a7a"/></svg>
<div class="t h g" style="left:472.5px;top:131px;font-size:11px;">Items</div>
<svg width="9" height="8" style="left:460.0px;top:148.5px" viewBox="0 0 9 8"><path d="M0.5,0.5 L8.5,0.5 L4.5,7.5Z" fill="#7a7a7a"/></svg>
<div class="t h " style="left:472.5px;top:147px;font-size:11px;">Objects</div>
<svg width="9" height="8" style="left:474.0px;top:164.5px" viewBox="0 0 9 8"><path d="M0.5,0.5 L8.5,0.5 L4.5,7.5Z" fill="#7a7a7a"/></svg>
<div class="t h " style="left:486.5px;top:163px;font-size:11px;">CeilingFanObject</div>
<svg width="9" height="8" style="left:488.0px;top:180.5px" viewBox="0 0 9 8"><path d="M0.5,0.5 L8.5,0.5 L4.5,7.5Z" fill="#7a7a7a"/></svg>
<div class="t h g" style="left:500.5px;top:179px;font-size:11px;">Light</div>
<div class="t h g" style="left:514.5px;top:195px;font-size:11px;">GI</div>
<div class="t h g" style="left:514.5px;top:211px;font-size:11px;">Point light</div>
<svg width="9" height="8" style="left:488.0px;top:228.5px" viewBox="0 0 9 8"><path d="M0.5,0.5 L8.5,0.5 L4.5,7.5Z" fill="#7a7a7a"/></svg>
<div class="t h b" style="left:500.5px;top:227px;font-size:11px;">CeilingLamp</div>
<div class="t h b" style="left:514.5px;top:243px;font-size:11px;">Ceiling Blades</div>
<div class="t h b" style="left:514.5px;top:259px;font-size:11px;">Ceiling Fan Support</div>
<svg width="8" height="9" style="left:489.0px;top:275.5px" viewBox="0 0 8 9"><path d="M0.5,0.5 L7.5,4.5 L0.5,8.5Z" fill="#7a7a7a"/></svg>
<div class="t h " style="left:500.5px;top:275px;font-size:11px;">Light Switch</div>
<svg width="8" height="9" style="left:489.0px;top:291.5px" viewBox="0 0 8 9"><path d="M0.5,0.5 L7.5,4.5 L0.5,8.5Z" fill="#7a7a7a"/></svg>
<div class="t h " style="left:500.5px;top:291px;font-size:11px;">Fan Switch</div>
<div class="a" style="left:642px;top:77px;width:98px;height:17px;background:linear-gradient(#474747,#3d3d3d);border-radius:4px 4px 0 0;box-shadow:inset 0 1px 0 #545454"></div>
<svg width="11" height="11" style="left:651px;top:80px" viewBox="0 0 11 11"><circle cx="5.5" cy="5.5" r="5.3" fill="#dadada"/><rect x="4.7" y="4.4" width="1.8" height="4.5" fill="#222"/><rect x="4.7" y="2" width="1.8" height="1.6" fill="#222"/><rect x="3.8" y="4.4" width="1.5" height="1" fill="#222"/><rect x="3.8" y="8" width="3.6" height="1" fill="#222"/></svg>
<div class="t tabt" style="left:665.5px;top:81px;font-size:11px;">Inspector</div>
<svg width="12" height="11" style="left:750px;top:80px" viewBox="0 0 12 11"><g fill="#c8c8c8"><rect x="0" y="1" width="12" height="1.2"/><rect x="0" y="5" width="12" height="1.2"/><rect x="0" y="9" width="12" height="1.2"/></g><g fill="#2a2a2a"><rect x="3" y="0" width="2" height="3.2"/><rect x="7" y="4" width="2" height="3.2"/><rect x="4" y="8" width="2" height="3.2"/></g><g fill="#c8c8c8"><rect x="3.5" y="0" width="1" height="3.2"/><rect x="7.5" y="4" width="1" height="3.2"/><rect x="4.5" y="8" width="1" height="3.2"/></g></svg>
<div class="t tabi" style="left:765.5px;top:81px;font-size:11px;">Lighting</div>
<svg width="8" height="10" style="left:919px;top:83px" viewBox="0 0 8 10"><path d="M5.5,4.5 L5.5,2.4 A2.1,2.1 0 0 0 1.4,1.8" fill="none" stroke="#8c8c8c" stroke-width="1.2"/><rect x="0" y="4" width="7" height="5" fill="#8c8c8c"/></svg>
<svg width="15" height="6" style="left:932px;top:87px" viewBox="0 0 15 6"><path d="M0,1 L5,1 L2.5,4Z" fill="#b4b4b4"/><rect x="6" y="0" width="8" height="1.2" fill="#c4c4c4"/><rect x="6" y="2" width="8" height="1.2" fill="#c4c4c4"/><rect x="6" y="4" width="8" height="1.2" fill="#c4c4c4"/></svg>
<div class="a" style="left:642px;top:94px;width:307px;height:576px;background:#383838"></div>
<div class="a" style="left:953px;top:77px;width:98px;height:17px;background:linear-gradient(#474747,#3d3d3d);border-radius:4px 4px 0 0;box-shadow:inset 0 1px 0 #545454"></div>
<svg width="11" height="9" style="left:961px;top:81px" viewBox="0 0 11 9"><path d="M0.5,1.5 L4,1.5 L5,2.5 L10.5,2.5 L10.5,8.5 L0.5,8.5Z" fill="#c0c0c0" stroke="#2a2a2a" stroke-width=".8"/><rect x="1.5" y="3.5" width="8" height="4.5" fill="#1e1e1e"/></svg>
<div class="t tabt" style="left:976px;top:81px;font-size:11px;">Project</div>
<svg width="8" height="10" style="left:1174px;top:83px" viewBox="0 0 8 10"><path d="M5.5,4.5 L5.5,2.4 A2.1,2.1 0 0 0 1.4,1.8" fill="none" stroke="#8c8c8c" stroke-width="1.2"/><rect x="0" y="4" width="7" height="5" fill="#8c8c8c"/></svg>
<svg width="15" height="6" style="left:1187px;top:87px" viewBox="0 0 15 6"><path d="M0,1 L5,1 L2.5,4Z" fill="#b4b4b4"/><rect x="6" y="0" width="8" height="1.2" fill="#c4c4c4"/><rect x="6" y="2" width="8" height="1.2" fill="#c4c4c4"/><rect x="6" y="4" width="8" height="1.2" fill="#c4c4c4"/></svg>
<div class="a" style="left:953px;top:94px;width:251px;height:17px;background:linear-gradient(#333333,#2b2b2b);box-shadow:inset 0 -1px 0 #1f1f1f"></div>
<div class="a" style="left:958px;top:94px;width:1px;height:16px;background:#1f1f1f"></div>
<div class="a" style="left:1010px;top:94px;width:1px;height:16px;background:#1f1f1f"></div>
<div class="a" style="left:1139px;top:94px;width:1px;height:16px;background:#1f1f1f"></div>
<div class="a" style="left:1156px;top:94px;width:1px;height:16px;background:#1f1f1f"></div>
<div class="a" style="left:1176px;top:94px;width:1px;height:16px;background:#1f1f1f"></div>
<div class="a" style="left:1198px;top:94px;width:1px;height:16px;background:#1f1f1f"></div>
<div class="t ui" style="left:965px;top:98px;font-size:10px;">Create</div>
<div class="arr" style="left:1003px;top:101.5px;border-top-color:#8a8a8a;border-width:3px 2.5px 0"></div>
<div class="a" style="left:1022px;top:95px;width:108px;height:13px;border-radius:7px;background:#303030;box-shadow:inset 0 0 0 1px #222, inset 0 1px 1px #1a1a1a"></div>
<svg width="9" height="9" style="left:1027px;top:97px" viewBox="0 0 9 9"><circle cx="3.5" cy="3.5" r="2.6" fill="none" stroke="#7a7a7a" stroke-width="1"/><path d="M5.4,5.4 L8,8" stroke="#7a7a7a" stroke-width="1.3"/></svg>
<svg width="12" height="11" style="left:1140px;top:96px" viewBox="0 0 12 11"><path d="M0,10 L3.5,4 L7,10Z" fill="#b8b8b8"/><circle cx="8" cy="3" r="2.8" fill="#b8b8b8"/><rect x="6" y="6" width="5" height="4.5" fill="#b8b8b8"/></svg>
<svg width="13" height="12" style="left:1160px;top:96px" viewBox="0 0 13 12"><path d="M0.8,1 L6,1 L12,7 L7,12 L0.8,6 Z" fill="#b8b8b8"/><circle cx="3.5" cy="3.5" r="1.2" fill="#2d2d2d"/></svg>
<svg width="12" height="12" style="left:1181px;top:96px" viewBox="0 0 12 12"><path d="M6,0.5 L7.6,4.3 L11.6,4.5 L8.5,7.1 L9.5,11 L6,8.8 L2.5,11 L3.5,7.1 L0.4,4.5 L4.4,4.3Z" fill="#a8a8a8"/></svg>
<div class="a" style="left:953px;top:111px;width:251px;height:559px;background:#383838"></div>
<div class="a" style="left:1062px;top:111px;width:1px;height:559px;background:#1f1f1f"></div>
<div class="a" style="left:1063px;top:111px;width:141px;height:18px;background:linear-gradient(#3c3c3c,#383838);box-shadow:inset 0 -1px 0 #222"></div>
<div class="t h" style="left:1069.5px;top:116px;font-size:11px;">Assets</div>
<svg width="6" height="7" style="left:1111.5px;top:119px" viewBox="0 0 6 7"><path d="M0.5,0.5 L5.5,3.5 L0.5,6.5Z" fill="#8a8a8a"/></svg>
<div class="t h" style="left:1124.5px;top:116px;font-size:11px;">Tutorial</div>
<svg width="6" height="7" style="left:1172px;top:119px" viewBox="0 0 6 7"><path d="M0.5,0.5 L5.5,3.5 L0.5,6.5Z" fill="#8a8a8a"/></svg>
<div class="t h" style="left:1186px;top:116px;font-size:11px;font-weight:bold">Ceiling Lamp</div>
<svg width="8" height="9" style="left:958px;top:116.5px" viewBox="0 0 8 9"><path d="M0.5,0.5 L7.5,4.5 L0.5,8.5Z" fill="#7a7a7a"/></svg>
<svg width="16" height="15" style="left:969px;top:113px" viewBox="0 0 16 15"><path d="M7.5,0.8 L9.6,5.3 L14.4,5.7 L10.8,9 L11.9,13.8 L7.5,11.3 L3.1,13.8 L4.2,9 L0.6,5.7 L5.4,5.3Z" fill="#f8d890" stroke="#c88a30" stroke-width=".6"/></svg>
<div class="t " style="left:987.7px;top:115px;font-size:12px;font-weight:bold;color:#c4c4c4;letter-spacing:.85px">Favorites</div>
<svg width="9" height="8" style="left:958px;top:148.5px" viewBox="0 0 9 8"><path d="M0.5,0.5 L8.5,0.5 L4.5,7.5Z" fill="#7a7a7a"/></svg>
<svg width="14" height="12" style="left:970px;top:145.5px" viewBox="0 0 14 12"><defs><linearGradient id="fg" x1="0" y1="0" x2="0" y2="1"><stop offset="0" stop-color="#e6ecef"/><stop offset=".45" stop-color="#9aa6ad"/><stop offset="1" stop-color="#4a545a"/></linearGradient></defs><path d="M0.5,2 L0.5,1 Q0.5,0.3 1.2,0.3 L5,0.3 L6,1.5 L12.8,1.5 Q13.5,1.5 13.5,2.2 L13.5,11.2 Q13.5,11.7 13,11.7 L1,11.7 Q0.5,11.7 0.5,11.2Z" fill="url(#fg)" stroke="#1c1c1c" stroke-width=".7"/><path d="M0.8,4 L13.2,4" stroke="#f4f7f8" stroke-width=".8"/></svg>
<div class="t " style="left:987.7px;top:146px;font-size:12px;font-weight:bold;color:#c4c4c4;letter-spacing:.85px">Assets</div>
<svg width="9" height="8" style="left:971.1px;top:164.5px" viewBox="0 0 9 8"><path d="M0.5,0.5 L8.5,0.5 L4.5,7.5Z" fill="#7a7a7a"/></svg>
<svg width="14" height="12" style="left:983.6px;top:161.5px" viewBox="0 0 14 12"><defs><linearGradient id="fg" x1="0" y1="0" x2="0" y2="1"><stop offset="0" stop-color="#e6ecef"/><stop offset=".45" stop-color="#9aa6ad"/><stop offset="1" stop-color="#4a545a"/></linearGradient></defs><path d="M0.5,2 L0.5,1 Q0.5,0.3 1.2,0.3 L5,0.3 L6,1.5 L12.8,1.5 Q13.5,1.5 13.5,2.2 L13.5,11.2 Q13.5,11.7 13,11.7 L1,11.7 Q0.5,11.7 0.5,11.2Z" fill="url(#fg)" stroke="#1c1c1c" stroke-width=".7"/><path d="M0.8,4 L13.2,4" stroke="#f4f7f8" stroke-width=".8"/></svg>
<div class="t h" style="left:1001.6px;top:163px;font-size:11px;max-width:60px;overflow:hidden">EcoModKit</div>
<svg width="14" height="12" style="left:998.0px;top:177.5px" viewBox="0 0 14 12"><defs><linearGradient id="fg" x1="0" y1="0" x2="0" y2="1"><stop offset="0" stop-color="#e6ecef"/><stop offset=".45" stop-color="#9aa6ad"/><stop offset="1" stop-color="#4a545a"/></linearGradient></defs><path d="M0.5,2 L0.5,1 Q0.5,0.3 1.2,0.3 L5,0.3 L6,1.5 L12.8,1.5 Q13.5,1.5 13.5,2.2 L13.5,11.2 Q13.5,11.7 13,11.7 L1,11.7 Q0.5,11.7 0.5,11.2Z" fill="url(#fg)" stroke="#1c1c1c" stroke-width=".7"/><path d="M0.8,4 L13.2,4" stroke="#f4f7f8" stroke-width=".8"/></svg>
<div class="t h" style="left:1016.0px;top:179px;font-size:11px;max-width:46px;overflow:hidden">Materials</div>
<svg width="14" height="12" style="left:998.0px;top:193.5px" viewBox="0 0 14 12"><defs><linearGradient id="fg" x1="0" y1="0" x2="0" y2="1"><stop offset="0" stop-color="#e6ecef"/><stop offset=".45" stop-color="#9aa6ad"/><stop offset="1" stop-color="#4a545a"/></linearGradient></defs><path d="M0.5,2 L0.5,1 Q0.5,0.3 1.2,0.3 L5,0.3 L6,1.5 L12.8,1.5 Q13.5,1.5 13.5,2.2 L13.5,11.2 Q13.5,11.7 13,11.7 L1,11.7 Q0.5,11.7 0.5,11.2Z" fill="url(#fg)" stroke="#1c1c1c" stroke-width=".7"/><path d="M0.8,4 L13.2,4" stroke="#f4f7f8" stroke-width=".8"/></svg>
<div class="t h" style="left:1016.0px;top:195px;font-size:11px;max-width:46px;overflow:hidden">Prefabs</div>
<svg width="9" height="8" style="left:985.5px;top:212.5px" viewBox="0 0 9 8"><path d="M0.5,0.5 L8.5,0.5 L4.5,7.5Z" fill="#7a7a7a"/></svg>
<svg width="14" height="12" style="left:998.0px;top:209.5px" viewBox="0 0 14 12"><defs><linearGradient id="fg" x1="0" y1="0" x2="0" y2="1"><stop offset="0" stop-color="#e6ecef"/><stop offset=".45" stop-color="#9aa6ad"/><stop offset="1" stop-color="#4a545a"/></linearGradient></defs><path d="M0.5,2 L0.5,1 Q0.5,0.3 1.2,0.3 L5,0.3 L6,1.5 L12.8,1.5 Q13.5,1.5 13.5,2.2 L13.5,11.2 Q13.5,11.7 13,11.7 L1,11.7 Q0.5,11.7 0.5,11.2Z" fill="url(#fg)" stroke="#1c1c1c" stroke-width=".7"/><path d="M0.8,4 L13.2,4" stroke="#f4f7f8" stroke-width=".8"/></svg>
<div class="t h" style="left:1016.0px;top:211px;font-size:11px;max-width:46px;overflow:hidden">Scripts</div>
<svg width="14" height="12" style="left:1012.4px;top:225.5px" viewBox="0 0 14 12"><defs><linearGradient id="fg" x1="0" y1="0" x2="0" y2="1"><stop offset="0" stop-color="#e6ecef"/><stop offset=".45" stop-color="#9aa6ad"/><stop offset="1" stop-color="#4a545a"/></linearGradient></defs><path d="M0.5,2 L0.5,1 Q0.5,0.3 1.2,0.3 L5,0.3 L6,1.5 L12.8,1.5 Q13.5,1.5 13.5,2.2 L13.5,11.2 Q13.5,11.7 13,11.7 L1,11.7 Q0.5,11.7 0.5,11.2Z" fill="url(#fg)" stroke="#1c1c1c" stroke-width=".7"/><path d="M0.8,4 L13.2,4" stroke="#f4f7f8" stroke-width=".8"/></svg>
<div class="t h" style="left:1030.4px;top:227px;font-size:11px;max-width:31px;overflow:hidden">Editor</div>
<svg width="14" height="12" style="left:998.0px;top:241.5px" viewBox="0 0 14 12"><defs><linearGradient id="fg" x1="0" y1="0" x2="0" y2="1"><stop offset="0" stop-color="#e6ecef"/><stop offset=".45" stop-color="#9aa6ad"/><stop offset="1" stop-color="#4a545a"/></linearGradient></defs><path d="M0.5,2 L0.5,1 Q0.5,0.3 1.2,0.3 L5,0.3 L6,1.5 L12.8,1.5 Q13.5,1.5 13.5,2.2 L13.5,11.2 Q13.5,11.7 13,11.7 L1,11.7 Q0.5,11.7 0.5,11.2Z" fill="url(#fg)" stroke="#1c1c1c" stroke-width=".7"/><path d="M0.8,4 L13.2,4" stroke="#f4f7f8" stroke-width=".8"/></svg>
<div class="t h" style="left:1016.0px;top:243px;font-size:11px;max-width:46px;overflow:hidden">Shaders</div>
<svg width="8" height="9" style="left:987.0px;top:260px" viewBox="0 0 8 9"><path d="M0.5,0.5 L7.5,4.5 L0.5,8.5Z" fill="#7a7a7a"/></svg>
<svg width="14" height="12" style="left:998.0px;top:257.5px" viewBox="0 0 14 12"><defs><linearGradient id="fg" x1="0" y1="0" x2="0" y2="1"><stop offset="0" stop-color="#e6ecef"/><stop offset=".45" stop-color="#9aa6ad"/><stop offset="1" stop-color="#4a545a"/></linearGradient></defs><path d="M0.5,2 L0.5,1 Q0.5,0.3 1.2,0.3 L5,0.3 L6,1.5 L12.8,1.5 Q13.5,1.5 13.5,2.2 L13.5,11.2 Q13.5,11.7 13,11.7 L1,11.7 Q0.5,11.7 0.5,11.2Z" fill="url(#fg)" stroke="#1c1c1c" stroke-width=".7"/><path d="M0.8,4 L13.2,4" stroke="#f4f7f8" stroke-width=".8"/></svg>
<div class="t h" style="left:1016.0px;top:259px;font-size:11px;max-width:46px;overflow:hidden">ThirdParty</div>
<svg width="8" height="9" style="left:987.0px;top:276px" viewBox="0 0 8 9"><path d="M0.5,0.5 L7.5,4.5 L0.5,8.5Z" fill="#7a7a7a"/></svg>
<svg width="14" height="12" style="left:998.0px;top:273.5px" viewBox="0 0 14 12"><defs><linearGradient id="fg" x1="0" y1="0" x2="0" y2="1"><stop offset="0" stop-color="#e6ecef"/><stop offset=".45" stop-color="#9aa6ad"/><stop offset="1" stop-color="#4a545a"/></linearGradient></defs><path d="M0.5,2 L0.5,1 Q0.5,0.3 1.2,0.3 L5,0.3 L6,1.5 L12.8,1.5 Q13.5,1.5 13.5,2.2 L13.5,11.2 Q13.5,11.7 13,11.7 L1,11.7 Q0.5,11.7 0.5,11.2Z" fill="url(#fg)" stroke="#1c1c1c" stroke-width=".7"/><path d="M0.8,4 L13.2,4" stroke="#f4f7f8" stroke-width=".8"/></svg>
<div class="t h" style="left:1016.0px;top:275px;font-size:11px;max-width:46px;overflow:hidden">VoxelEngine</div>
<svg width="14" height="12" style="left:983.6px;top:289.5px" viewBox="0 0 14 12"><defs><linearGradient id="fg" x1="0" y1="0" x2="0" y2="1"><stop offset="0" stop-color="#e6ecef"/><stop offset=".45" stop-color="#9aa6ad"/><stop offset="1" stop-color="#4a545a"/></linearGradient></defs><path d="M0.5,2 L0.5,1 Q0.5,0.3 1.2,0.3 L5,0.3 L6,1.5 L12.8,1.5 Q13.5,1.5 13.5,2.2 L13.5,11.2 Q13.5,11.7 13,11.7 L1,11.7 Q0.5,11.7 0.5,11.2Z" fill="url(#fg)" stroke="#1c1c1c" stroke-width=".7"/><path d="M0.8,4 L13.2,4" stroke="#f4f7f8" stroke-width=".8"/></svg>
<div class="t h" style="left:1001.6px;top:291px;font-size:11px;max-width:60px;overflow:hidden">Plugins</div>
<svg width="14" height="12" style="left:983.6px;top:305.5px" viewBox="0 0 14 12"><defs><linearGradient id="fg" x1="0" y1="0" x2="0" y2="1"><stop offset="0" stop-color="#e6ecef"/><stop offset=".45" stop-color="#9aa6ad"/><stop offset="1" stop-color="#4a545a"/></linearGradient></defs><path d="M0.5,2 L0.5,1 Q0.5,0.3 1.2,0.3 L5,0.3 L6,1.5 L12.8,1.5 Q13.5,1.5 13.5,2.2 L13.5,11.2 Q13.5,11.7 13,11.7 L1,11.7 Q0.5,11.7 0.5,11.2Z" fill="url(#fg)" stroke="#1c1c1c" stroke-width=".7"/><path d="M0.8,4 L13.2,4" stroke="#f4f7f8" stroke-width=".8"/></svg>
<div class="t h" style="left:1001.6px;top:307px;font-size:11px;max-width:60px;overflow:hidden">StreamingAssets</div>
<svg width="9" height="8" style="left:971.1px;top:324.5px" viewBox="0 0 9 8"><path d="M0.5,0.5 L8.5,0.5 L4.5,7.5Z" fill="#7a7a7a"/></svg>
<svg width="14" height="12" style="left:983.6px;top:321.5px" viewBox="0 0 14 12"><defs><linearGradient id="fg" x1="0" y1="0" x2="0" y2="1"><stop offset="0" stop-color="#e6ecef"/><stop offset=".45" stop-color="#9aa6ad"/><stop offset="1" stop-color="#4a545a"/></linearGradient></defs><path d="M0.5,2 L0.5,1 Q0.5,0.3 1.2,0.3 L5,0.3 L6,1.5 L12.8,1.5 Q13.5,1.5 13.5,2.2 L13.5,11.2 Q13.5,11.7 13,11.7 L1,11.7 Q0.5,11.7 0.5,11.2Z" fill="url(#fg)" stroke="#1c1c1c" stroke-width=".7"/><path d="M0.8,4 L13.2,4" stroke="#f4f7f8" stroke-width=".8"/></svg>
<div class="t h" style="left:1001.6px;top:323px;font-size:11px;max-width:60px;overflow:hidden">Tutorial</div>
<div class="a" style="left:953px;top:336px;width:109px;height:16px;background:#484848"></div>
<svg width="14" height="12" style="left:998.0px;top:337.5px" viewBox="0 0 14 12"><defs><linearGradient id="fg" x1="0" y1="0" x2="0" y2="1"><stop offset="0" stop-color="#e6ecef"/><stop offset=".45" stop-color="#9aa6ad"/><stop offset="1" stop-color="#4a545a"/></linearGradient></defs><path d="M0.5,2 L0.5,1 Q0.5,0.3 1.2,0.3 L5,0.3 L6,1.5 L12.8,1.5 Q13.5,1.5 13.5,2.2 L13.5,11.2 Q13.5,11.7 13,11.7 L1,11.7 Q0.5,11.7 0.5,11.2Z" fill="url(#fg)" stroke="#1c1c1c" stroke-width=".7"/><path d="M0.8,4 L13.2,4" stroke="#f4f7f8" stroke-width=".8"/></svg>
<div class="t h" style="left:1016.0px;top:339px;font-size:11px;max-width:46px;overflow:hidden">Ceiling Lamp</div>
<svg width="16" height="15" style="left:1079px;top:130px" viewBox="0 0 16 15"><rect width="16" height="15" fill="#6f7a86"/><rect x="3" y="3" width="2" height="11" fill="#111"/><rect x="5" y="4" width="4" height="10" fill="#a8b070"/><circle cx="3.5" cy="6" r="1.2" fill="#fff"/><rect x="10" y="0" width="6" height="12" fill="#111"/><path d="M11,1 L15,3 L11,5 L15,7 L11,9 L15,11" stroke="#aab4bc" fill="none" stroke-width="1"/><rect x="0" y="13" width="16" height="2" fill="#dfe6ea"/><path d="M10,15 A3,2.5 0 0 1 16,15" fill="#111"/></svg>
<div class="t h" style="left:1097.8px;top:134px;font-size:11px;">Ceiling_Lamp_Albedo</div>
<svg width="16" height="15" style="left:1079px;top:146px" viewBox="0 0 16 15"><rect width="16" height="15" fill="#141110"/><rect x="3" y="5" width="3" height="2" fill="#f0f0f0"/><rect x="4" y="13" width="12" height="2" fill="#dfe6ea"/><path d="M10,15 A3,2.5 0 0 1 16,15" fill="#111"/><path d="M10,12 A3,2.5 0 0 1 16,12 L16,13 L10,13Z" fill="#dfe6ea"/></svg>
<div class="t h" style="left:1097.8px;top:150px;font-size:11px;">Ceiling_Lamp_Emission</div>
<svg width="16" height="15" style="left:1079px;top:162px" viewBox="0 0 16 15"><rect width="16" height="15" fill="#d0d6d8"/><rect x="2" y="5" width="6" height="9" fill="#666"/><rect x="2" y="8" width="2" height="6" fill="#111"/><rect x="10" y="0" width="6" height="12" fill="#111"/><path d="M11,1 L15,3 L11,5 L15,7 L11,9 L15,11" stroke="#aab4bc" fill="none" stroke-width="1"/><path d="M10,15 A3,2.5 0 0 1 16,15" fill="#111"/></svg>
<div class="t h" style="left:1097.8px;top:166px;font-size:11px;">Ceiling_Lamp_Metallic</div>
<svg width="16" height="15" style="left:1079px;top:178px" viewBox="0 0 16 15"><rect width="16" height="15" fill="#8890e8"/></svg>
<div class="t h" style="left:1097.8px;top:182px;font-size:11px;">Ceiling_Lamp_Normal</div>
<svg width="16" height="16" style="left:1079px;top:194px" viewBox="0 0 16 16"><defs><radialGradient id="sg" cx=".4" cy=".35" r=".65"><stop offset="0" stop-color="#dce6f2"/><stop offset=".4" stop-color="#7c9cc8"/><stop offset="1" stop-color="#34507c"/></radialGradient></defs><circle cx="8" cy="8" r="6.9" fill="url(#sg)"/></svg>
<div class="t h" style="left:1097.8px;top:198px;font-size:11px;">Ceiling_Mat_Off</div>
<svg width="16" height="16" style="left:1079px;top:210px" viewBox="0 0 16 16"><defs><radialGradient id="sg" cx=".4" cy=".35" r=".65"><stop offset="0" stop-color="#dce6f2"/><stop offset=".4" stop-color="#7c9cc8"/><stop offset="1" stop-color="#34507c"/></radialGradient></defs><circle cx="8" cy="8" r="6.9" fill="url(#sg)"/></svg>
<div class="t h" style="left:1097.8px;top:214px;font-size:11px;">Ceiling_Mat_On</div>
<svg width="16" height="16" style="left:1079px;top:226px" viewBox="0 0 16 16"><rect x="1.5" y="1.5" width="13" height="13" fill="#4a4a4a" stroke="#6a6a6a" stroke-width="1"/><rect x="2.5" y="2.5" width="5.5" height="5.5" fill="#cfcfcf"/><rect x="8" y="8" width="5.5" height="5.5" fill="#bdbdbd"/><rect x="8" y="2.5" width="5.5" height="5.5" fill="#555"/><rect x="2.5" y="8" width="5.5" height="5.5" fill="#555"/><path d="M3,9 L7,12 L3,14Z" fill="#f4f4f4"/><path d="M6,6 L10,10" stroke="#333" stroke-width="1.2"/></svg>
<div class="t h" style="left:1097.8px;top:230px;font-size:11px;">CeilingFan</div>
<svg width="8" height="9" style="left:1068px;top:246px" viewBox="0 0 8 9"><path d="M0.5,0.5 L7.5,4.5 L0.5,8.5Z" fill="#6e6e6e"/></svg>
<svg width="16" height="16" style="left:1079px;top:242px" viewBox="0 0 16 16"><path d="M8,1 L14.5,4 L14.5,11.5 L8,15 L1.5,11.5 L1.5,4Z" fill="#5aa0e8"/><path d="M1.5,4 L8,7 L14.5,4 L8,1Z" fill="#d8ecff"/><path d="M8,7 L14.5,4 L14.5,11.5 L8,15Z" fill="#3978c8"/><path d="M8,1 L14.5,4 L14.5,11.5 L8,15 L1.5,11.5 L1.5,4Z" fill="none" stroke="#1a1a1a" stroke-width=".8"/><rect x="10" y="9" width="5" height="6" fill="#e8e8e8" stroke="#333" stroke-width=".6"/></svg>
<div class="t h" style="left:1097.8px;top:246px;font-size:11px;">CeilingLamp</div>
<svg width="8" height="9" style="left:1068px;top:262px" viewBox="0 0 8 9"><path d="M0.5,0.5 L7.5,4.5 L0.5,8.5Z" fill="#6e6e6e"/></svg>
<svg width="16" height="16" style="left:1079px;top:258px" viewBox="0 0 16 16"><path d="M8,1 L14.5,4 L14.5,11.5 L8,15 L1.5,11.5 L1.5,4Z" fill="#5aa0e8"/><path d="M1.5,4 L8,7 L14.5,4 L8,1Z" fill="#d8ecff"/><path d="M8,7 L14.5,4 L14.5,11.5 L8,15Z" fill="#3978c8"/><path d="M8,1 L14.5,4 L14.5,11.5 L8,15 L1.5,11.5 L1.5,4Z" fill="none" stroke="#1a1a1a" stroke-width=".8"/><rect x="10" y="9" width="5" height="6" fill="#e8e8e8" stroke="#333" stroke-width=".6"/></svg>
<div class="t h" style="left:1097.8px;top:262px;font-size:11px;">CeilingLamp_Collision</div>
<svg width="8" height="9" style="left:1068px;top:278px" viewBox="0 0 8 9"><path d="M0.5,0.5 L7.5,4.5 L0.5,8.5Z" fill="#6e6e6e"/></svg>
<svg width="16" height="16" style="left:1079px;top:274px" viewBox="0 0 16 16"><path d="M2,3 L6.5,8.5 M14,3 L9.5,8.5 M3,13 L6.5,9.5 M13,13 L9.5,9.5" stroke="#c8a870" stroke-width="1.5" fill="none"/><path d="M4,2 L5,5 M12,2 L11,5" stroke="#a07840" stroke-width="1"/><path d="M5,8 L8,6 L11,8 L8,11Z" fill="#f0f0f0"/></svg>
<div class="t h" style="left:1097.8px;top:278px;font-size:11px;">celing_lamp_icon</div>
<svg width="16" height="16" style="left:1079px;top:290px" viewBox="0 0 16 16"><defs><linearGradient id="ag" x1="0" y1="0" x2="1" y2="1"><stop offset="0" stop-color="#6a6a6a"/><stop offset="1" stop-color="#3e3e3e"/></linearGradient></defs><rect x="2" y="1.5" width="12" height="13" fill="url(#ag)" stroke="#2a2a2a" stroke-width="1"/><path d="M6.5,4.5 L11,8 L6.5,11.5Z" fill="#d8d8d8"/></svg>
<div class="t h" style="left:1097.8px;top:294px;font-size:11px;">FanOn</div>
<div class="a" style="left:1063px;top:660px;width:141px;height:10px;background:#3e3e3e;box-shadow:inset 0 1px 0 #1f1f1f"></div>
<div class="a" style="left:1144px;top:667px;width:46px;height:6px;border-radius:3px;background:#2a2a2a;box-shadow:inset 0 0 0 1px #1e1e1e"></div>
<div class="a" style="left:1134px;top:664px;width:10px;height:10px;border-radius:50%;background:linear-gradient(#8a8a8a,#5a5a5a);box-shadow:0 0 0 1px #222"></div>
<div class="a" style="left:949px;top:94px;width:4px;height:576px;background:#282a29"></div>
<div class="a" style="left:441px;top:94px;width:1px;height:576px;background:#212121"></div>
<div class="a" style="left:442px;top:111px;width:1px;height:559px;background:#3c3c3c"></div>
<div class="a" style="left:637px;top:111px;width:1px;height:559px;background:#3c3c3c"></div>
<div class="a" style="left:638px;top:94px;width:1px;height:576px;background:#212121"></div>
<div class="a" style="left:641px;top:94px;width:1px;height:576px;background:#212121"></div>
<div class="a" style="left:642px;top:94px;width:1px;height:576px;background:#3c3c3c"></div>
<div class="a" style="left:948px;top:94px;width:1px;height:576px;background:#3c3c3c"></div>
<div class="a" style="left:949px;top:94px;width:1px;height:576px;background:#212121"></div>
<div class="a" style="left:952px;top:94px;width:1px;height:576px;background:#212121"></div>
<div class="a" style="left:953px;top:111px;width:1px;height:559px;background:#3c3c3c"></div>
<div class="a" style="left:438px;top:490px;width:1px;height:180px;background:#212121"></div>
<div class="a" style="left:437px;top:507px;width:1px;height:163px;background:#3c3c3c"></div>

</body></html>
